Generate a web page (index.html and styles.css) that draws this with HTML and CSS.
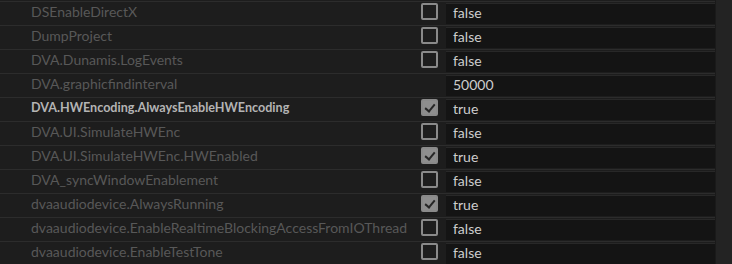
FILE: index.html
```html
<!DOCTYPE html>
<html lang="en">
<head>
  <meta charset="UTF-8">
  <title>Debug Database</title>
  <link rel="stylesheet" href="styles.css">
</head>
<body>
  <div class="panel">
    <div class="table">
      <div class="row dim">
        <span class="name">DSEnableDirectX</span>
        <span class="check"><span class="box"></span></span>
        <span class="value">false</span>
      </div>
      <div class="row dim">
        <span class="name">DumpProject</span>
        <span class="check"><span class="box"></span></span>
        <span class="value">false</span>
      </div>
      <div class="row dim">
        <span class="name">DVA.Dunamis.LogEvents</span>
        <span class="check"><span class="box"></span></span>
        <span class="value">false</span>
      </div>
      <div class="row dim">
        <span class="name">DVA.graphicfindinterval</span>
        <span class="check"></span>
        <span class="value">50000</span>
      </div>
      <div class="row changed">
        <span class="name">DVA.HWEncoding.AlwaysEnableHWEncoding</span>
        <span class="check"><span class="box checked"></span></span>
        <span class="value">true</span>
      </div>
      <div class="row dim">
        <span class="name">DVA.UI.SimulateHWEnc</span>
        <span class="check"><span class="box"></span></span>
        <span class="value">false</span>
      </div>
      <div class="row dim">
        <span class="name">DVA.UI.SimulateHWEnc.HWEnabled</span>
        <span class="check"><span class="box checked"></span></span>
        <span class="value">true</span>
      </div>
      <div class="row dim">
        <span class="name">DVA_syncWindowEnablement</span>
        <span class="check"><span class="box"></span></span>
        <span class="value">false</span>
      </div>
      <div class="row dim">
        <span class="name">dvaaudiodevice.AlwaysRunning</span>
        <span class="check"><span class="box checked"></span></span>
        <span class="value">true</span>
      </div>
      <div class="row dim">
        <span class="name">dvaaudiodevice.EnableRealtimeBlockingAccessFromIOThread</span>
        <span class="check"><span class="box"></span></span>
        <span class="value">false</span>
      </div>
      <div class="row dim">
        <span class="name">dvaaudiodevice.EnableTestTone</span>
        <span class="check"><span class="box"></span></span>
        <span class="value">false</span>
      </div>
    </div>
    <div class="scrollbar"></div>
  </div>
</body>
</html>
```

FILE: styles.css
```css
/* Panel */
body, html {
  margin: 0;
  padding: 0;
  height: 100%;
  overflow: hidden;
  background-color: #1d1d1d;
  font-family: Lato, "Open Sans", sans-serif;
  font-size: 14px;
}

.panel {
  display: flex;
  height: 100%;
}

.table {
  flex: 1;
  padding-top: 1px;
}

.scrollbar {
  width: 16px;
  background-color: #232323;
  border-left: 1px solid #1a1a1a;
}

/* Rows */
.row {
  display: flex;
  align-items: stretch;
  height: 23px;
  border-top: 1px solid #2c2c2c;
}

.name {
  flex: 1;
  padding-left: 31px;
  line-height: 20px;
  color: #585858;
  white-space: nowrap;
}

.row.changed .name {
  color: #b4b4b4;
  font-weight: bold;
  font-size: 12.6px;
}

.check {
  width: 28px;
  display: flex;
  justify-content: center;
  padding-top: 1px;
  margin-right: 3px;
}

.box {
  width: 13px;
  height: 13px;
  border: 2px solid #8a8a8a;
  border-radius: 2px;
}

.box.checked {
  background-color: #8e8e8e;
  position: relative;
}

/* check mark */
.box.checked::after {
  content: "";
  position: absolute;
  left: 4px;
  top: 1px;
  width: 4px;
  height: 8px;
  border: solid #262626;
  border-width: 0 2px 2px 0;
  transform: rotate(40deg);
}

.value {
  width: 262px;
  padding-left: 7px;
  margin: 1px 0 1px;
  height: 20px;
  line-height: 18px;
  background-color: #141414;
  border-top: 1px solid #282828;
  color: #cdcdcd;
}
```
